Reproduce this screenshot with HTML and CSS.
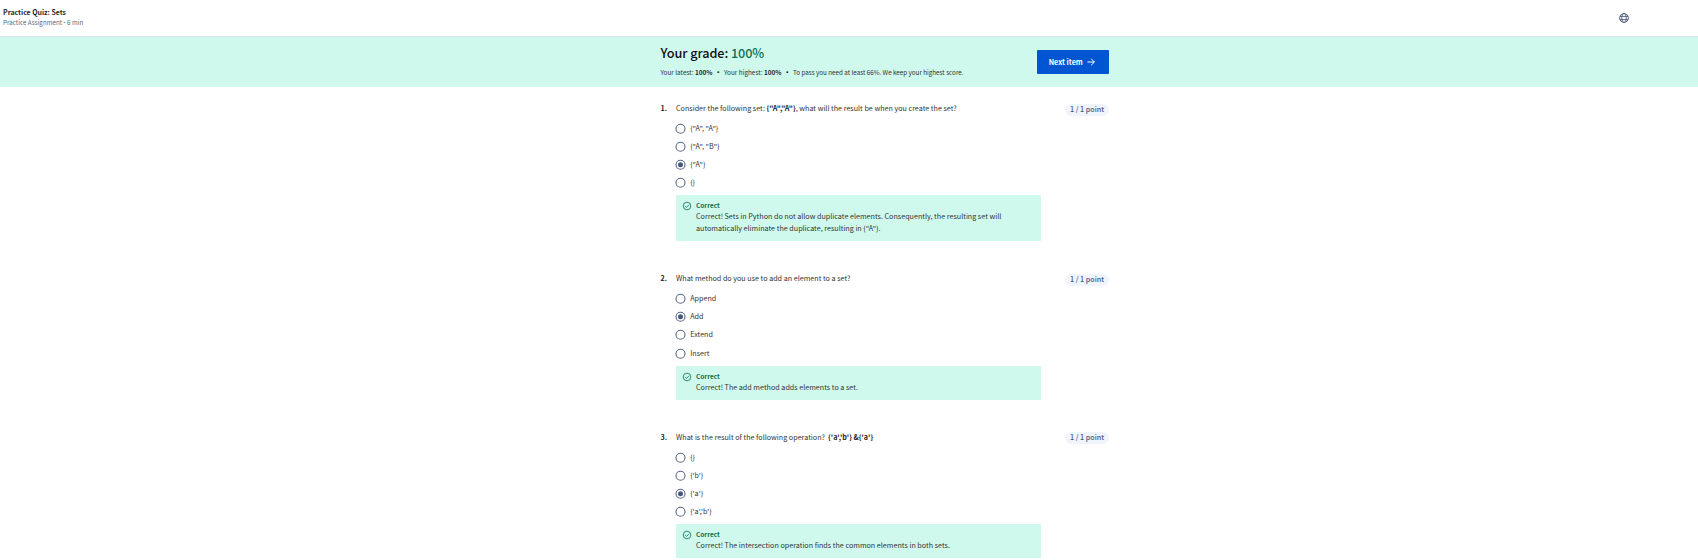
FILE: index.html
```html
<!DOCTYPE html>
<html lang="en">
<head>
<meta charset="utf-8">
<title>Practice Quiz: Sets</title>
<link rel="stylesheet" href="styles.css">
</head>
<body>
<svg class="sprite" width="0" height="0">
  <symbol id="check" viewBox="0 0 10 10"><circle cx="5" cy="5" r="3.8"/><path d="M3.1 5.1 4.5 6.4 7 3.8"/></symbol>
  <symbol id="radio" viewBox="0 0 12 12"><circle cx="5.5" cy="6.7" r="4.5"/></symbol>
  <symbol id="radio-on" viewBox="0 0 12 12"><circle cx="5.5" cy="6.7" r="4.5"/><circle class="radio-dot" cx="5.5" cy="6.7" r="2.5"/></symbol>
</svg>
<header class="topbar">
  <div class="topbar-titles">
    <h1 class="quiz-title">Practice Quiz: Sets</h1>
    <p class="quiz-meta">Practice Assignment <span class="dot">•</span> 6 min</p>
  </div>
  <svg class="globe" viewBox="0 0 10 10"><circle cx="5" cy="5" r="4.4"/><ellipse cx="5" cy="5" rx="2.2" ry="4.4"/><path d="M1 3.4H9M1 6.6H9"/></svg>
</header>
<section class="banner">
  <div class="banner-inner">
    <div>
      <h2 class="grade">Your grade: <span class="grade-value">100%</span></h2>
      <p class="stats"><span>Your latest: <b>100%</b></span><span class="dot">•</span><span>Your highest: <b>100%</b></span><span class="dot">•</span><span class="pass">To pass you need at least 66%. We keep your highest score.</span></p>
    </div>
    <button class="next"><span>Next item</span><svg viewBox="0 0 8 8"><path d="M.4 4H7.3M4.2 .8 7.4 4 4.2 7.2"/></svg></button>
  </div>
</section>
<main class="quiz">
  <section class="question">
    <div class="number">1.</div>
    <div class="body">
      <p class="prompt">Consider the following set: <b>{"A","A"}</b>, what will the result be when you create the set?</p>
      <ul class="options">
        <li><svg class="radio"><use href="#radio"/></svg><span>{"A", "A"}</span></li>
        <li><svg class="radio"><use href="#radio"/></svg><span>{"A", "B"}</span></li>
        <li><svg class="radio"><use href="#radio-on"/></svg><span>{"A"}</span></li>
        <li><svg class="radio"><use href="#radio"/></svg><span>{}</span></li>
      </ul>
      <div class="feedback">
        <svg class="check"><use href="#check"/></svg>
        <div><h3>Correct</h3><p>Correct! Sets in Python do not allow duplicate elements. Consequently, the resulting set will<br>automatically eliminate the duplicate, resulting in {"A"}.</p></div>
      </div>
    </div>
    <div class="points">1 / 1 point</div>
  </section>
  <section class="question second">
    <div class="number">2.</div>
    <div class="body">
      <p class="prompt">What method do you use to add an element to a set?</p>
      <ul class="options">
        <li><svg class="radio"><use href="#radio"/></svg><span>Append</span></li>
        <li><svg class="radio"><use href="#radio-on"/></svg><span>Add</span></li>
        <li><svg class="radio"><use href="#radio"/></svg><span>Extend</span></li>
        <li><svg class="radio"><use href="#radio"/></svg><span>Insert</span></li>
      </ul>
      <div class="feedback">
        <svg class="check"><use href="#check"/></svg>
        <div><h3>Correct</h3><p>Correct! The add method adds elements to a set.</p></div>
      </div>
    </div>
    <div class="points">1 / 1 point</div>
  </section>
  <section class="question third">
    <div class="number">3.</div>
    <div class="body">
      <p class="prompt">What is the result of the following operation?&nbsp; <b>{'a','b'} &amp;{'a'}</b></p>
      <ul class="options">
        <li><svg class="radio"><use href="#radio"/></svg><span>{}</span></li>
        <li><svg class="radio"><use href="#radio"/></svg><span>{'b'}</span></li>
        <li><svg class="radio"><use href="#radio-on"/></svg><span>{'a'}</span></li>
        <li><svg class="radio"><use href="#radio"/></svg><span>{'a','b'}</span></li>
      </ul>
      <div class="feedback">
        <svg class="check"><use href="#check"/></svg>
        <div><h3>Correct</h3><p>Correct! The intersection operation finds the common elements in both sets.</p></div>
      </div>
    </div>
    <div class="points">1 / 1 point</div>
  </section>
</main>
</body>
</html>
```
FILE: styles.css
```css
* { box-sizing: border-box; margin: 0; padding: 0; }
body {
  height: 560px;
  overflow: hidden;
  background: #fff;
  color: #333;
  font: 7.18px/12px "Noto Sans CJK SC", "Noto Sans", sans-serif;
}
b { color: #1f1f1f; }
svg { fill: none; stroke: currentColor; display: block; }
.sprite { position: absolute; }
ul { list-style: none; }
.dot { font-family: Roboto, sans-serif; }

.topbar {
  display: flex;
  justify-content: space-between;
  height: 37px;
  padding: 6px 69px 0 3px;
  border-bottom: 1px solid #dae1ed;
}
.quiz-title { font-size: 6.95px; line-height: 12px; color: #1f1f1f; }
.quiz-meta { font-size: 6.25px; line-height: 10px; color: #5b6780; }
.globe { width: 10px; height: 10px; margin-top: 7px; color: #5b6780; stroke-width: 1; }

.banner { height: 50px; background: #d0f9ed; }
.banner-inner {
  display: flex;
  justify-content: space-between;
  width: 448.5px;
  margin-left: 660.5px;
  padding-top: 6px;
  white-space: nowrap;
}
.grade { font-size: 12.7px; line-height: 20px; font-weight: 500; letter-spacing: -.08px; color: #0f1114; }
.grade-value { color: #087051; }
.stats { display: flex; font-size: 6.4px; line-height: 10px; margin-top: 5px; }
.stats .dot { width: 11.5px; text-align: center; font-size: 8px; font-weight: 700; color: #1f1f1f; }
.stats .pass { font-size: 6.28px; }
.next {
  display: flex;
  align-items: center;
  justify-content: center;
  gap: 4.5px;
  width: 72px;
  height: 24px;
  margin-top: 7px;
  padding-right: 2px;
  border: 0;
  border-radius: 1px;
  background: #0056d2;
  color: #fff;
  font: 700 7.2px/12px "Noto Sans CJK SC", "Noto Sans", sans-serif;
}
.next svg { width: 8px; height: 8px; stroke-width: 1; }

.quiz { width: 449px; height: 473px; overflow: hidden; margin-left: 660px; padding-top: 15px; }
.question { display: flex; height: 170px; white-space: nowrap; }
.question.second { height: 159px; }
.question.third { height: 156px; }
.number { width: 16px; padding-left: .5px; font-weight: 700; color: #1f1f1f; }
.body { width: 365px; }
.prompt { height: 17px; }
.options { margin-left: -1px; padding-bottom: 1px; }
.options li { display: flex; align-items: center; gap: 3.2px; height: 18px; }
.radio { width: 12px; height: 12px; color: #5b6785; stroke-width: 1.1; }
.radio-dot { fill: #48587c; stroke: none; }
.second .options li:last-child { height: 19px; padding-top: 1px; }
.feedback {
  display: flex;
  gap: 4px;
  margin-top: 3px;
  padding: 5px 6px 7px;
  background: #d0f9ed;
}
.feedback h3 { font-size: 6.5px; line-height: 10px; color: #087051; }
.check { width: 10px; height: 10px; margin-top: 1px; color: #087051; stroke-width: .8; }
.points {
  width: 44px;
  height: 12px;
  margin: 2px 0 0 24px;
  border-radius: 6px;
  background: #f0f4fb;
  color: #48587c;
  font-weight: 500;
  line-height: 11px;
  text-align: center;
}
.third .points { margin-top: 1px; }
```
